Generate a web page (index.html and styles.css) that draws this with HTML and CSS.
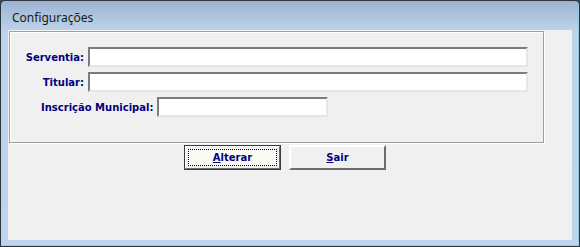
FILE: index.html
```html
<!DOCTYPE html>
<html lang="pt-BR">

<head>
  <meta charset="UTF-8" />
  <title>Configurações</title>
  <link rel="stylesheet" href="styles.css">
</head>

<body>
  <div class="window">
    <div class="titlebar">Configurações</div>

    <div class="client">
      <div class="groupbox">
        <div class="row">
          <label class="label" for="serventia">Serventia:</label>
          <input id="serventia" class="field field-wide" type="text" />
        </div>
        <div class="row">
          <label class="label" for="titular">Titular:</label>
          <input id="titular" class="field field-wide" type="text" />
        </div>
        <div class="row row-inscricao">
          <label class="label label-auto" for="inscricao">Inscrição Municipal:</label>
          <input id="inscricao" class="field field-short" type="text" />
        </div>
      </div>

      <div class="btn-group">
        <button class="btn btn-default"><span class="focus"><u>A</u>lterar</span></button>
        <button class="btn"><span class="focus"><u>S</u>air</span></button>
      </div>
    </div>
  </div>
</body>

</html>
```

FILE: styles.css
```css
* {
  box-sizing: border-box;
}

body {
  margin: 0;
  padding: 0;
  background-color: #3b4756;
}

.window {
  width: 580px;
  height: 247px;
  display: flex;
  flex-direction: column;
  padding: 0 7px 6px 7px;
  border: 1px solid #2c3440;
  border-radius: 5px 5px 0 0;
  background: linear-gradient(#9cb4d1 0, #bdd3eb 30px, #bfd5ed 100%);
  box-shadow: inset -1px -1px 0 #8dcdee;
}

.titlebar {
  height: 29px;
  padding: 8px 0 0 4px;
  font-family: "Noto Sans", sans-serif;
  font-size: 12px;
  color: #1b1b1b;
}

.client {
  flex: 1;
  background-color: #f0f0f0;
  padding: 1px 0 0 1px;
}

.groupbox {
  width: 535px;
  height: 112px;
  border: 1px solid #a0a0a0;
  box-shadow: 1px 1px 0 #ffffff, inset 1px 1px 0 #ffffff;
  padding-top: 15px;
}

.row {
  display: flex;
  align-items: center;
  gap: 4px;
  margin-bottom: 5px;
}

.label {
  width: 74px;
  text-align: right;
  font-family: "DejaVu Sans", sans-serif;
  font-weight: bold;
  font-size: 10px;
  color: #000080;
}

.label-auto {
  width: auto;
  margin-left: 31px;
}

.field {
  height: 20px;
  border: 2px solid;
  border-color: #7c7c7c #e6e6e6 #e6e6e6 #7c7c7c;
  background-color: #ffffff;
  outline: none;
}

.field-wide {
  width: 440px;
}

.field-short {
  width: 171px;
}

.btn-group {
  display: flex;
  gap: 8px;
  margin: 2px 0 0 175px;
}

.btn {
  width: 97px;
  height: 25px;
  padding: 0;
  border: 2px solid;
  border-color: #ffffff #6d6d6d #6d6d6d #ffffff;
  background-color: #f0f0f0;
  font-family: "DejaVu Sans", sans-serif;
  font-weight: bold;
  font-size: 10px;
  color: #000080;
}

.btn-default {
  outline: 1px solid #3a3a3a;
  outline-offset: -1px;
}

.btn .focus {
  display: flex;
  align-items: center;
  justify-content: center;
  height: 100%;
  margin: 0 1px;
}

.btn-default .focus {
  margin: 2px 2px;
  height: calc(100% - 4px);
  border: 1px dotted #000000;
  background-color: #fafaf2;
}
```
